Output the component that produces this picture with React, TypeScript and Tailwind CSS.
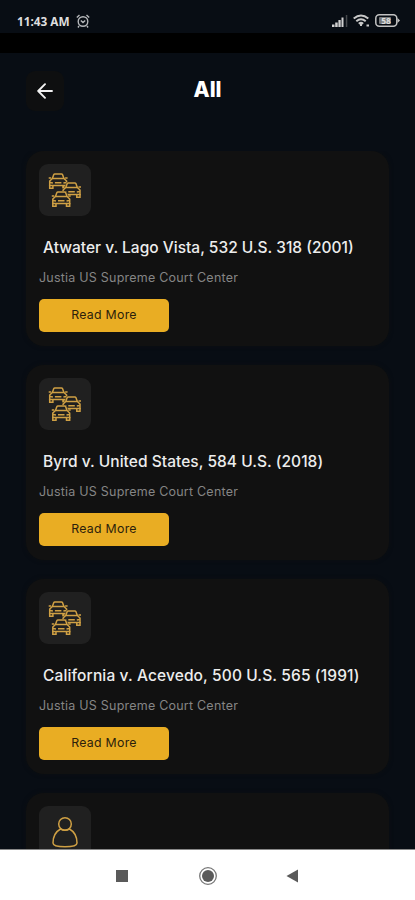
import React from 'react'

interface CaseItem {
    id: number
    title?: string
    source?: string
    icon: 'cars' | 'person'
    tracking?: string
}

const cases: CaseItem[] = [
    { id: 1, title: 'Atwater v. Lago Vista, 532 U.S. 318 (2001)', source: 'Justia US Supreme Court Center', icon: 'cars', tracking: 'tracking-[0px]' },
    { id: 2, title: 'Byrd v. United States, 584 U.S. (2018)', source: 'Justia US Supreme Court Center', icon: 'cars', tracking: 'tracking-[0.04px]' },
    { id: 3, title: 'California v. Acevedo, 500 U.S. 565 (1991)', source: 'Justia US Supreme Court Center', icon: 'cars', tracking: 'tracking-[0.13px]' },
    { id: 4, icon: 'person' },
]

const Car = () => (
    <>
        <path d="M4 5.500 5.300 1.700Q5.600 1 6.500 1h6.500q.9 0 1.200.7L15.500 5.500" />
        <path d="M4 5.500h11.500l2.700 2.500v4.500H1.300V8z" />
        <path d="M1.300 12v3.200h3.200v-2.700M15 12.500v2.700h3.200V12M.3 5h2.500M16.700 5h2.500M6.500 9.800h6.500M1.500 9.500 4.500 10M18 9.500 15 10" />
    </>
)

const CarsIcon = () => (
    <svg width="34" height="36" viewBox="0 0 34 36" fill="none" stroke="#cfa044" strokeWidth="1.500">
        <g transform="translate(.4 1)"><Car /></g>
        <g transform="translate(13.800 10)"><path d="M5 0h9l3 5 2 3v7H0V8l3-3z" fill="#202020" stroke="none" /><Car /></g>
        <g transform="translate(3.500 19)"><path d="M5 0h9l3 5 2 3v8H0V8l3-3z" fill="#202020" stroke="none" /><Car /></g>
    </svg>
)

const PersonIcon = () => (
    <svg width="28" height="34" viewBox="0 0 28 34" fill="none" stroke="#cfa044" strokeWidth="1.500">
        <circle cx="14" cy="9" r="6.300" />
        <path d="M9.500 14C5 16.500 2 21.500 2 28Q2 31.800 14 31.800T26 28C26 21.500 23 16.500 18.500 14q-4.500 2.300-9 0" />
    </svg>
)

const StatusBar = () => (
    <div className="flex h-[33px] shrink-0 items-center justify-between pt-2 pl-[17px] pr-[15px]">
        <div className="flex items-center gap-[6px]">
            <span className="font-['Noto_Sans',sans-serif] text-[11.800px] leading-4 font-bold whitespace-nowrap text-[#dedede]">11:43 AM</span>
            <svg width="14" height="14" viewBox="0 0 14 14" fill="none" stroke="#b5b7ba" strokeWidth="1.400">
                <circle cx="7" cy="7.500" r="4.800" />
                <path d="M.8 3.500 3.500 1M13.200 3.500 10.500 1M3 12l-1 1.500M11 12l1 1.500M4.800 6.500 7 8.500l2.200-2" />
            </svg>
        </div>
        <div className="flex items-center gap-[5px]">
            <svg width="16" height="12" viewBox="0 0 16 12" fill="#d0d0d0">
                <path d="M0 9.500h2.500V12H0zM3.200 7.500h2.500V12H3.200zM6.400 5h2.300v7H6.400zM9.500 2.500h2V12h-2z" />
                <path d="M13.800 0h1.500v12h-1.500z" fill="#45484c" />
            </svg>
            <svg width="17" height="13" viewBox="0 0 17 13" fill="none" stroke="#c8c8c8" strokeWidth="2">
                <path d="M.7 4.500q7.300-6 14.600 0M3.300 7.200q4.700-4 9.400 0M5.800 9.700q2.200-1.700 4.400 0" />
                <path d="M7 11h2M13.500 11.500h2.500" />
            </svg>
            <svg width="25" height="13" viewBox="0 0 25 13">
                <rect x=".8" y=".8" width="21" height="11.400" rx="3.500" fill="none" stroke="#c2c2c2" strokeWidth="1.500" />
                <path d="M22.500 4 25 6.500 22.500 9z" fill="#c2c2c2" />
                <rect x="4" y="3" width="12" height="7" rx="1" fill="#77797b" />
                <text x="11" y="9.500" textAnchor="middle" fontFamily="Noto Sans" fontWeight="700" fontSize="8.500" fill="#dedede">58</text>
            </svg>
        </div>
    </div>
)

const CaseCard = ({ item }: { item: CaseItem }) => (
    <div className="h-[195px] shrink-0 rounded-[18px] bg-[#111111] pt-[13px] pl-[13px] shadow-[0_0_4px_#0d0f11]">
        <div className="flex size-[52px] items-center justify-center rounded-[9px] bg-[#202020]">
            {item.icon === 'cars' ? <CarsIcon /> : <PersonIcon />}
        </div>
        {item.title && (
            <>
                <h2 className={`mt-[21px] pl-1 text-[15.500px] leading-[22px] font-medium whitespace-nowrap text-[#ededed] ${item.tracking}`}>{item.title}</h2>
                <p className="mt-[10px] text-[12.500px] leading-[18px] tracking-[0.220px] whitespace-nowrap text-[#858585]">{item.source}</p>
                <button className="mt-[12px] flex h-[33px] w-[130px] items-center justify-center rounded-[5px] bg-[#e9ad23] pb-px text-[12.300px] tracking-[0.300px] text-[#2b210c]">
                    Read More
                </button>
            </>
        )}
    </div>
)

const App = () => {
    return (
        <div className="flex h-[900px] w-[415px] flex-col overflow-hidden bg-[#080d14] font-['Inter',sans-serif]">
            <StatusBar />
            <div className="h-5 shrink-0 bg-black" />
            <header className="grid h-[98px] shrink-0 grid-cols-[38px_1fr_38px] items-start px-[26px] pt-[18px]">
                <button className="flex h-[40px] w-[38px] items-center justify-center rounded-[9px] bg-[#0e0f10]">
                    <svg width="16" height="16" viewBox="0 0 16 16" fill="none" stroke="#f2f2f2" strokeWidth="1.900" strokeLinecap="round" strokeLinejoin="round">
                        <path d="M15 8H1.500M8 1.200 1.200 8 8 14.800" />
                    </svg>
                </button>
                <h1 className="pt-[3px] text-center text-[21px] leading-8 font-extrabold text-white">All</h1>
            </header>
            <main className="flex min-h-0 flex-1 flex-col gap-[19px] overflow-hidden px-[26px]">
                {cases.map((item) => <CaseCard key={item.id} item={item} />)}
            </main>
            <nav className="flex h-[51px] shrink-0 items-center border-t border-[#888888] bg-white pt-[2px] pl-[115px]">
                <svg width="184" height="20" viewBox="0 0 184 20" fill="#5a5a5a">
                    <path d="M1 4h12v12H1z" />
                    <circle cx="93" cy="10" r="6" />
                    <circle cx="93" cy="10" r="8.300" fill="none" stroke="#777777" strokeWidth="1.300" />
                    <path d="M183 3.500v13L171.500 10z" />
                </svg>
            </nav>
        </div>
    )
}

export default App
